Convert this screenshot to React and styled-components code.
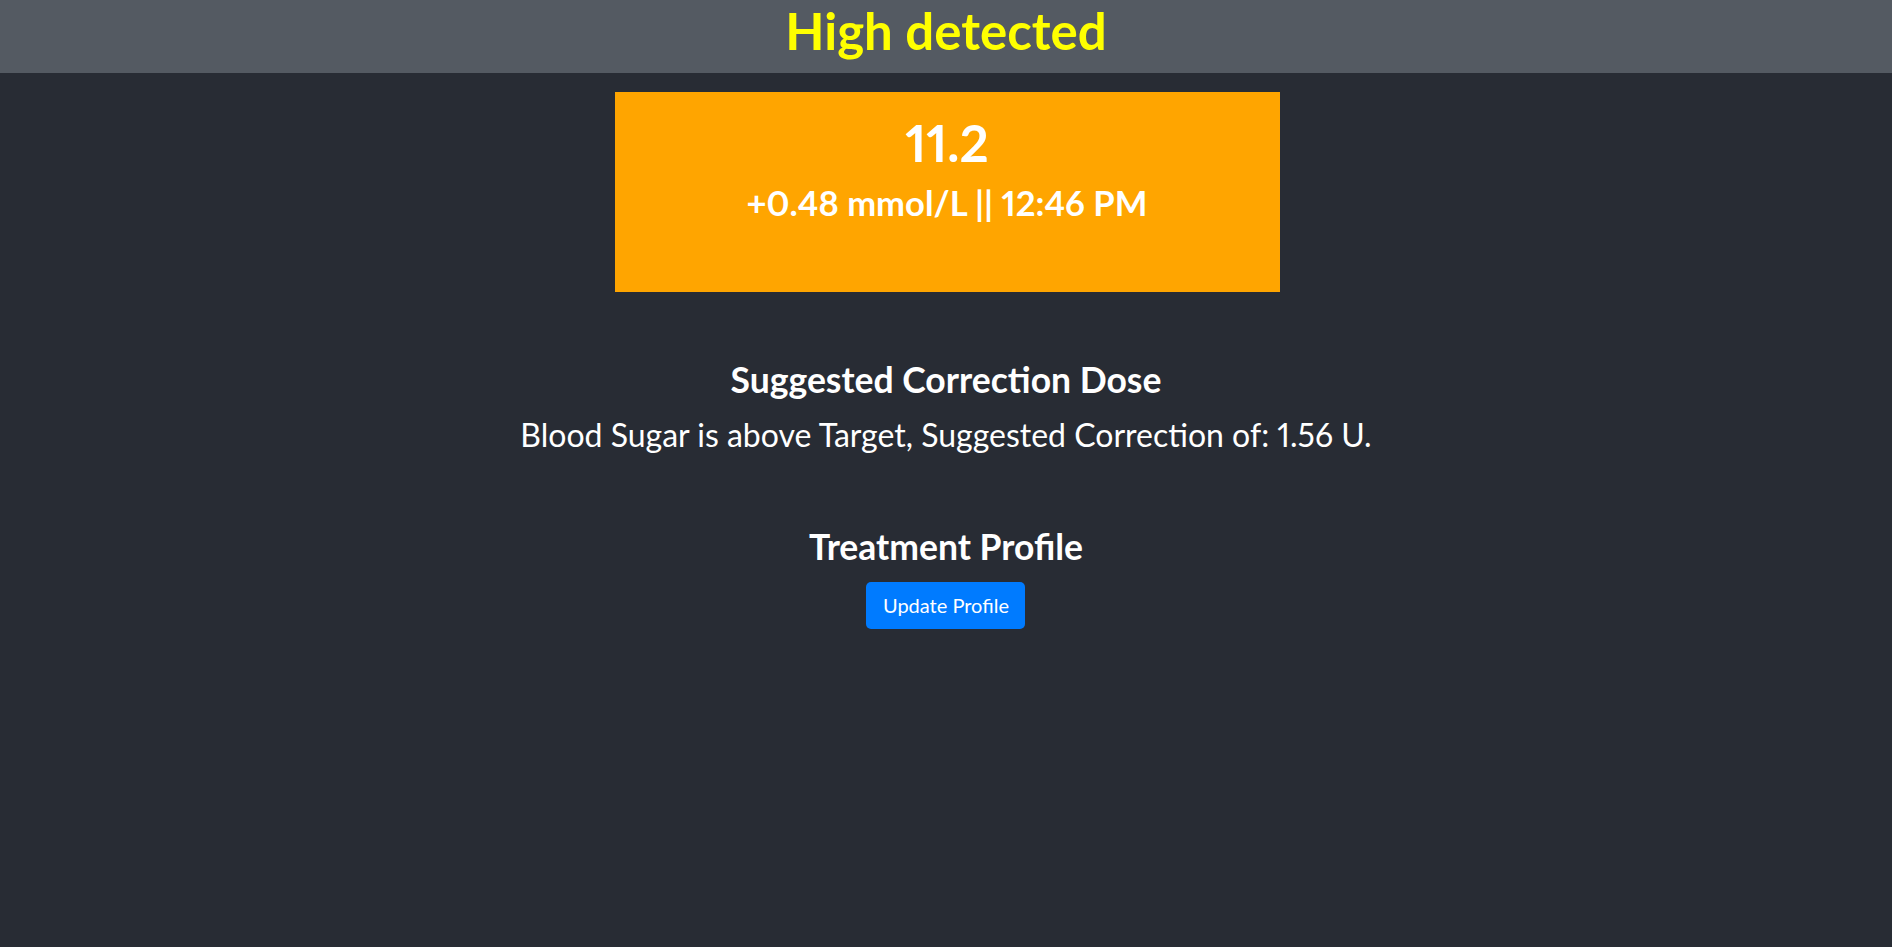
import React from "react";
import styled, { createGlobalStyle } from "styled-components";

const Global = createGlobalStyle`
  html, body { margin: 0; padding: 0; background: #282c34; }
  body {
    font-family: Lato, "Noto Sans", sans-serif;
    color: #fff;
    font-variant-numeric: proportional-nums;
  }
  * { box-sizing: border-box; }
`;

const Page = styled.div`
  min-height: 947px;
  background: #282c34;
  display: flex;
  flex-direction: column;
  align-items: center;
`;

const Header = styled.header`
  align-self: stretch;
  height: 73px;
  background: #545a62;
  display: flex;
  justify-content: center;
  align-items: flex-start;
`;

const Title = styled.h1`
  margin: 0;
  font-size: 51px;
  line-height: 61px;
  font-weight: 700;
  color: #ffff00;
`;

const ReadingBox = styled.section`
  margin: 19px 0 0 2px;
  width: 665px;
  height: 200px;
  background: #ffa500;
  padding-top: 20px;
  display: flex;
  flex-direction: column;
  align-items: center;
`;

const Value = styled.div`
  font-size: ${(p) => p.$size}px;
  line-height: 1.2;
  font-weight: 700;
  color: #fff;
  margin-top: ${(p) => p.$gap || 0}px;
`;

const Section = styled.section`
  margin-top: ${(p) => p.$gap}px;
  display: flex;
  flex-direction: column;
  align-items: center;
`;

const Heading = styled.h2`
  margin: 0;
  font-size: 35.5px;
  line-height: 1.2;
  font-weight: 700;
`;

const Text = styled.p`
  margin: 14px 0 0;
  font-size: 32px;
  line-height: 1.2;
  font-weight: 400;
`;

const Button = styled.button`
  margin-top: 13px;
  width: 159px;
  height: 47px;
  background: #007bff;
  color: #fff;
  border: none;
  border-radius: 5px;
  font-family: Lato, "Noto Sans", sans-serif;
  font-size: 20px;
  padding: 0;
  cursor: pointer;
`;

export default function App() {
  return (
    <>
      <Global />
      <Page>
        <Header>
          <Title>High detected</Title>
        </Header>
        <ReadingBox>
          <Value $size={51}>11.2</Value>
          <Value $size={34.6} $gap={9}>+0.48 mmol/L || 12:46 PM</Value>
        </ReadingBox>
        <Section $gap={67}>
          <Heading>Suggested Correction Dose</Heading>
          <Text>Blood Sugar is above Target, Suggested Correction of: 1.56 U.</Text>
        </Section>
        <Section $gap={72}>
          <Heading>Treatment Profile</Heading>
          <Button>Update Profile</Button>
        </Section>
      </Page>
    </>
  );
}
